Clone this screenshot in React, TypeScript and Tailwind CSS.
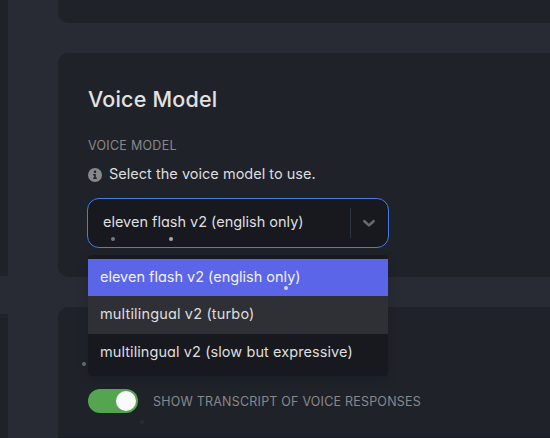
import React, { useState } from "react";

const options = [
  { label: "eleven flash v2 (english only)", style: "h-[37px] bg-[#5b65e8] text-[#f1f1fa] tracking-[-0.01px]" },
  { label: "multilingual v2 (turbo)", style: "h-[38px] bg-[#2f3035] text-[#dededf] tracking-[0.16px]" },
  { label: "multilingual v2 (slow but expressive)", style: "h-[37px] text-[#dededf] tracking-[0.08px]" },
];

function InfoIcon() {
  return (
    <svg className="mt-px size-[14px] shrink-0" viewBox="0 0 14 14">
      <circle cx="7" cy="7" r="7" fill="#87888b" />
      <circle cx="7" cy="3.8" r="1.25" fill="#1f2229" />
      <path d="M5.2 6h2.6v3.6h1v1.5H5.2V9.6h1V7.4h-1z" fill="#1f2229" />
    </svg>
  );
}

function ModelSelect() {
  return (
    <div className="relative -ml-px mt-[14px] w-[302px]">
      <div className="flex h-[50px] items-center rounded-[12px] border border-[#427ee9] bg-[#18191e]">
        <span className="flex-1 whitespace-nowrap pb-0.5 pl-[15px] text-[14.5px] leading-5 tracking-[-0.01px] text-[#dfdfe0]">
          eleven flash v2 (english only)
        </span>
        <span className="h-[30px] w-px bg-[#2c3441]" />
        <span className="flex w-[37px] justify-center pr-[2px]">
          <svg className="size-[14px]" viewBox="0 0 14 14" fill="none">
            <path d="M2.4 5.2 7 9.4l4.6-4.2" stroke="#69696c" strokeWidth="2.6" strokeLinecap="round" strokeLinejoin="round" />
          </svg>
        </span>
      </div>
      <ul className="absolute left-px top-[57px] z-10 w-[300px] rounded-[4px] bg-[#18191e] pb-[5px] pt-1 shadow-[0_4px_11px_rgba(0,0,0,0.12)]">
        {options.map((option) => (
          <li key={option.label} className={`flex items-center whitespace-nowrap px-3 pb-0.5 text-[14.5px] leading-5 ${option.style}`}>
            {option.label}
          </li>
        ))}
      </ul>
    </div>
  );
}

function Toggle() {
  const [on, setOn] = useState(true);
  return (
    <button
      role="switch"
      aria-checked={on}
      aria-label="Show transcript of voice responses"
      onClick={() => setOn(!on)}
      className={`flex h-6 w-[50px] items-center rounded-full px-[2px] ${on ? "justify-end bg-[#55a550]" : "justify-start bg-[#4b4d53]"}`}
    >
      <span className="size-5 rounded-full bg-[#fafafa]" />
    </button>
  );
}

function Particles() {
  return (
    <div className="pointer-events-none absolute inset-0 z-20">
      <i className="absolute left-[111px] top-[237px] size-1 rounded-full bg-[#77787a]" />
      <i className="absolute left-[169px] top-[237px] size-1 rounded-full bg-[#a9a9ab]" />
      <i className="absolute left-[284px] top-[286px] size-1 rounded-full bg-[#d5d7f4]" />
      <i className="absolute left-[82px] top-[362px] size-1 rounded-full bg-[#66676b]" />
      <i className="absolute left-[140px] top-[420px] size-1 rounded-full bg-[#2a2d34]" />
    </div>
  );
}

export default function App() {
  return (
    <div className="relative flex h-[438px] w-[550px] overflow-hidden bg-[#282b33] font-['Inter','Liberation_Sans',sans-serif] [font-feature-settings:'cv11']">
      <aside className="flex w-2 shrink-0 flex-col gap-[38px]">
        <div className="h-[276px] bg-[#1f2229]" />
        <div className="flex-1 bg-[#1f2229]" />
      </aside>
      <main className="ml-[50px] flex flex-1 flex-col gap-[30px]">
        <section className="h-[23px] shrink-0 rounded-bl-[10px] bg-[#1f2229]" />
        <section className="h-[224px] shrink-0 rounded-l-[10px] bg-[#1f2229] pl-[30px] pt-[31px]">
          <h2 className="text-[21.5px] font-medium leading-[30px] tracking-[0.2px] text-[#e2e2e2]">Voice Model</h2>
          <h3 className="mt-[23px] text-[12.5px] leading-[18px] tracking-[0.28px] text-[#88898c]">VOICE MODEL</h3>
          <p className="mt-[9px] flex h-5 items-center gap-[7px] whitespace-nowrap text-[14.5px] leading-5 tracking-[0.02px] text-[#dededf]">
            <InfoIcon />
            <span>Select the voice model to use.</span>
          </p>
          <ModelSelect />
        </section>
        <section className="flex-1 rounded-tl-[10px] border-b border-[#1e1b23] bg-[#1f2229] pl-[30px] pt-[82px]">
          <div className="flex items-center gap-[15px]">
            <Toggle />
            <span className="whitespace-nowrap pt-0.5 text-[12.5px] leading-[18px] tracking-[0.21px] text-[#88898c]">
              SHOW TRANSCRIPT OF VOICE RESPONSES
            </span>
          </div>
        </section>
      </main>
      <Particles />
    </div>
  );
}
